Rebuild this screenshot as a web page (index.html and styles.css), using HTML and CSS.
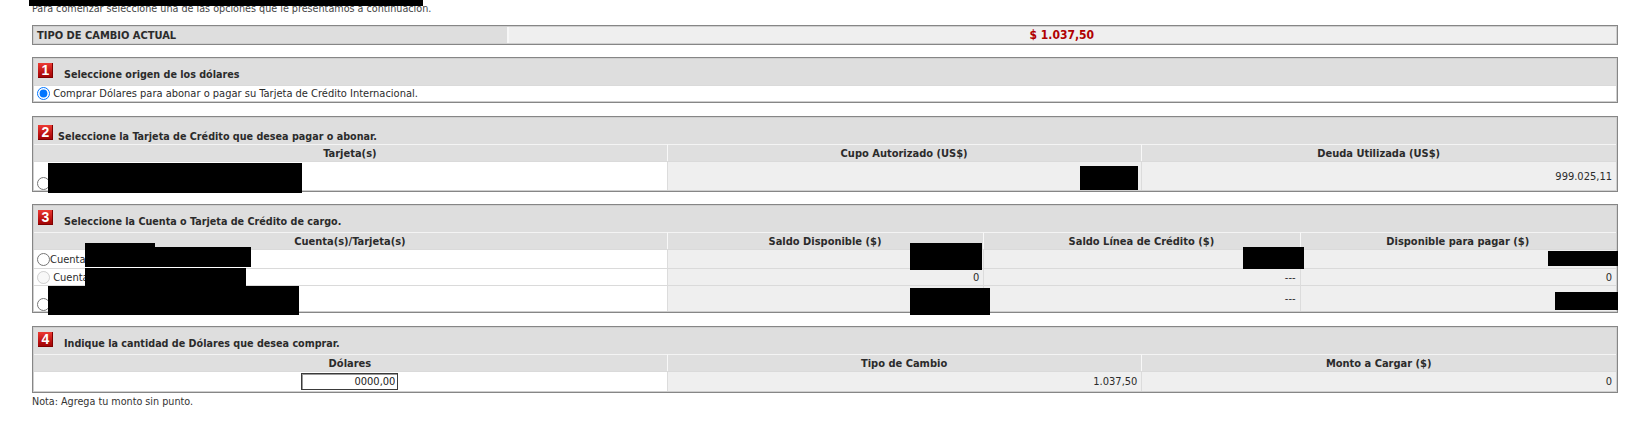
FILE: index.html
```html
<html>
<head>
<title>Compra de Dólares</title>
<link rel="stylesheet" href="styles.css">
</head>
<body>
<div id="cont">
<div class="intro">Para comenzar seleccione una de las opciones que le presentamos a continuación.</div>

<table class="caja">
  <colgroup><col class="c30"><col class="c70"></colgroup>
  <tr class="f16">
    <td class="lbl">TIPO DE CAMBIO ACTUAL</td>
    <td class="tc">$ 1.037,50</td>
  </tr>
</table>

<table class="caja m13">
  <tr class="titulo"><td><span class="num sp">1</span>Seleccione origen de los dólares</td></tr>
  <tr class="f16"><td class="opt"><input type="radio" name="origen" checked> Comprar Dólares para abonar o pagar su Tarjeta de Crédito Internacional.</td></tr>
</table>

<table class="caja">
  <colgroup><col class="c40"><col class="c30"><col class="c30"></colgroup>
  <tr class="titulo t2"><td colspan="3"><span class="num">2</span>Seleccione la Tarjeta de Crédito que desea pagar o abonar.</td></tr>
  <tr class="cab">
    <th>Tarjeta(s)</th>
    <th>Cupo Autorizado (US$)</th>
    <th>Deuda Utilizada (US$)</th>
  </tr>
  <tr class="f29">
    <td class="opt abajo"><input type="radio" name="tarjeta"></td>
    <td class="valor"></td>
    <td class="valor">999.025,11</td>
  </tr>
</table>

<table class="caja m13">
  <colgroup><col class="c40"><col class="c20"><col class="c20"><col class="c20"></colgroup>
  <tr class="titulo"><td colspan="4"><span class="num sp">3</span>Seleccione la Cuenta o Tarjeta de Crédito de cargo.</td></tr>
  <tr class="cab">
    <th>Cuenta(s)/Tarjeta(s)</th>
    <th>Saldo Disponible ($)</th>
    <th>Saldo Línea de Crédito ($)</th>
    <th>Disponible para pagar ($)</th>
  </tr>
  <tr class="f19">
    <td class="opt"><input type="radio" name="cargo">Cuenta</td>
    <td class="valor"></td>
    <td class="valor"></td>
    <td class="valor"></td>
  </tr>
  <tr class="f17">
    <td class="opt"><input type="radio" name="cargo" disabled> Cuenta</td>
    <td class="valor">0</td>
    <td class="valor">---</td>
    <td class="valor">0</td>
  </tr>
  <tr class="f26">
    <td class="opt abajo"><input type="radio" name="cargo"></td>
    <td class="valor"></td>
    <td class="valor">---</td>
    <td class="valor"></td>
  </tr>
</table>

<table class="caja nota-sig">
  <colgroup><col class="c40"><col class="c30"><col class="c30"></colgroup>
  <tr class="titulo"><td colspan="3"><span class="num sp">4</span>Indique la cantidad de Dólares que desea comprar.</td></tr>
  <tr class="cab">
    <th>Dólares</th>
    <th>Tipo de Cambio</th>
    <th>Monto a Cargar ($)</th>
  </tr>
  <tr class="f20">
    <td class="centro"><input type="text" class="monto" value="0000,00"></td>
    <td class="valor">1.037,50</td>
    <td class="valor">0</td>
  </tr>
</table>
<div class="nota">Nota: Agrega tu monto sin punto.</div>
</div>

<!-- datos tapados en la captura -->
<div class="tapa t0"></div>
<div class="tapa t1"></div>
<div class="tapa t2"></div>
<div class="tapa t3"></div>
<div class="tapa t4"></div>
<div class="tapa t5"></div>
<div class="tapa t6"></div>
<div class="tapa t7"></div>
<div class="tapa t8"></div>
<div class="tapa t9"></div>
<div class="tapa t10"></div>
<div class="tapa t11"></div>
</body>
</html>
```

FILE: styles.css
```css
  body {
    margin: 0;
    font-family: Tahoma, "DejaVu Sans Condensed", "DejaVu Sans", sans-serif;
    font-size: 11px;
    color: #333;
    background-color: #fff;
  }

  #cont {
    padding: 0 15px 0 32px;
  }

  .intro {
    height: 25px;
    line-height: 18px;
    color: #444;
    font-size: 10.7px;
  }

  table.caja {
    width: 100%;
    table-layout: fixed;
    border-collapse: separate;
    border-spacing: 0;
    border: 1px solid #868686;
    padding: 1px;
    background-color: #cfcfcf;
    margin-bottom: 12px;
    font-size: 11px;
    color: #2b2b2b;
  }

  col.c20 { width: 20%; }
  col.c30 { width: 30%; }
  col.c40 { width: 40%; }
  col.c70 { width: 70%; }

  table.m13 {
    margin-bottom: 13px;
  }

  table.nota-sig {
    margin-bottom: 0;
  }

  td, th {
    padding: 0 4px 0 3px;
    white-space: nowrap;
    overflow: hidden;
  }

  .f16 { height: 16px; }
  .f17 { height: 17px; }
  .f19 { height: 19px; }
  .f20 { height: 20px; }
  .f26 { height: 26px; }
  .f29 { height: 29px; }

  td.lbl {
    background-color: #dedede;
    font-weight: bold;
    border-right: 2px solid #f7f7f7;
  }

  td.tc {
    background-color: #efefef;
    color: #b00000;
    font-weight: bold;
    font-size: 12px;
    text-align: center;
  }

  tr.titulo {
    height: 26px;
  }

  tr.titulo td {
    background-color: #dedede;
    font-weight: bold;
    font-size: 10.7px;
    vertical-align: bottom;
    padding: 0 3px 4px 4px;
  }

  tr.t2 td {
    padding-bottom: 1px;
  }

  .num {
    display: inline-block;
    width: 15px;
    height: 15px;
    line-height: 15px;
    margin-right: 5px;
    text-align: center;
    vertical-align: 3px;
    color: #fff;
    font-family: "Liberation Sans", Arial, sans-serif;
    font-size: 14px;
    font-weight: bold;
    background: linear-gradient(#ec3a33, #b50d0d 70%, #9c0505);
    box-shadow: inset -1px -1px 0 #800000;
  }

  .num.sp {
    margin-right: 11px;
  }

  tr.cab {
    height: 17px;
  }

  tr.cab th {
    background-color: #dfdfdf;
    font-weight: bold;
    text-align: center;
    border-top: 1px solid #f4f4f4;
  }

  tr.cab th + th {
    border-left: 1px solid #f8f8f8;
  }

  td.opt {
    background-color: #fff;
    border-top: 1px solid #dadada;
    padding-left: 0;
  }

  td.abajo {
    vertical-align: bottom;
  }

  td.centro {
    background-color: #fff;
    border-top: 1px solid #dadada;
    text-align: center;
  }

  td.valor {
    background-color: #efefef;
    border-top: 1px solid #dadada;
    border-left: 1px solid #dcdcdc;
    text-align: right;
  }

  input[type=radio] {
    width: 13px;
    height: 13px;
    margin: 0 0 0 3px;
    vertical-align: -3px;
  }

  input.monto {
    box-sizing: border-box;
    width: 97px;
    height: 17px;
    padding: 0 2px;
    font-family: inherit;
    font-size: 11px;
    color: #222;
    text-align: right;
    border: 1px solid #3a3a3a;
    box-shadow: inset 1px 1px 0 #9a9a9a;
    outline: none;
  }

  .nota {
    padding-top: 2px;
    color: #333;
    font-size: 10.7px;
  }

  .tapa {
    position: absolute;
    background-color: #000;
  }

  .t0 { left: 29px; top: 0; width: 394px; height: 6px; }
  .t1 { left: 48px; top: 163px; width: 254px; height: 30px; }
  .t2 { left: 1080px; top: 166px; width: 58px; height: 24px; }
  .t3 { left: 85px; top: 243px; width: 70px; height: 24px; }
  .t4 { left: 85px; top: 247px; width: 166px; height: 20px; }
  .t5 { left: 85px; top: 268px; width: 161px; height: 18px; }
  .t6 { left: 48px; top: 286px; width: 251px; height: 29px; }
  .t7 { left: 910px; top: 243px; width: 72px; height: 27px; }
  .t8 { left: 1243px; top: 247px; width: 61px; height: 22px; }
  .t9 { left: 1548px; top: 251px; width: 70px; height: 15px; }
  .t10 { left: 910px; top: 288px; width: 80px; height: 27px; }
  .t11 { left: 1555px; top: 292px; width: 63px; height: 18px; }
```
